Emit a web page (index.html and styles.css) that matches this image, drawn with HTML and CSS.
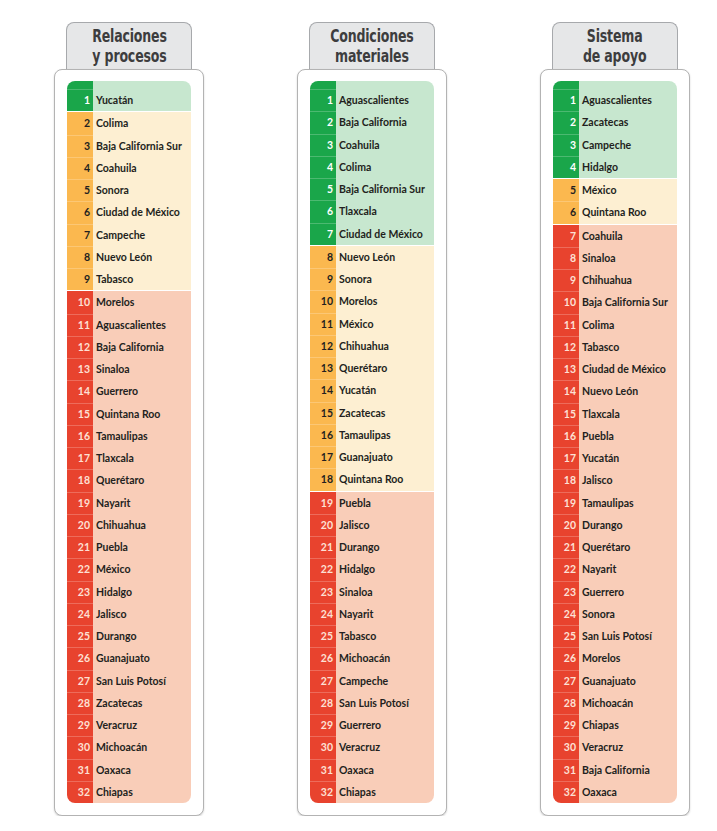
FILE: index.html
```html
<!DOCTYPE html>
<html lang="es">
<head>
<meta charset="utf-8">
<title>Ranking</title>
<link rel="stylesheet" href="styles.css">
</head>
<body>
<div class="page">
  <section class="col">
    <div class="tab"><h2 class="title"><span class="line">Relaciones</span><span class="line">y procesos</span></h2></div>
    <div class="card">
      <div class="table">
        <div class="group green first">
          <div class="row"><span class="n">1</span><span class="s">Yucatán</span></div>
        </div>
        <div class="group yellow">
          <div class="row"><span class="n">2</span><span class="s">Colima</span></div>
          <div class="row"><span class="n">3</span><span class="s">Baja California Sur</span></div>
          <div class="row"><span class="n">4</span><span class="s">Coahuila</span></div>
          <div class="row"><span class="n">5</span><span class="s">Sonora</span></div>
          <div class="row"><span class="n">6</span><span class="s">Ciudad de México</span></div>
          <div class="row"><span class="n">7</span><span class="s">Campeche</span></div>
          <div class="row"><span class="n">8</span><span class="s">Nuevo León</span></div>
          <div class="row"><span class="n">9</span><span class="s">Tabasco</span></div>
        </div>
        <div class="group red">
          <div class="row"><span class="n">10</span><span class="s">Morelos</span></div>
          <div class="row"><span class="n">11</span><span class="s">Aguascalientes</span></div>
          <div class="row"><span class="n">12</span><span class="s">Baja California</span></div>
          <div class="row"><span class="n">13</span><span class="s">Sinaloa</span></div>
          <div class="row"><span class="n">14</span><span class="s">Guerrero</span></div>
          <div class="row"><span class="n">15</span><span class="s">Quintana Roo</span></div>
          <div class="row"><span class="n">16</span><span class="s">Tamaulipas</span></div>
          <div class="row"><span class="n">17</span><span class="s">Tlaxcala</span></div>
          <div class="row"><span class="n">18</span><span class="s">Querétaro</span></div>
          <div class="row"><span class="n">19</span><span class="s">Nayarit</span></div>
          <div class="row"><span class="n">20</span><span class="s">Chihuahua</span></div>
          <div class="row"><span class="n">21</span><span class="s">Puebla</span></div>
          <div class="row"><span class="n">22</span><span class="s">México</span></div>
          <div class="row"><span class="n">23</span><span class="s">Hidalgo</span></div>
          <div class="row"><span class="n">24</span><span class="s">Jalisco</span></div>
          <div class="row"><span class="n">25</span><span class="s">Durango</span></div>
          <div class="row"><span class="n">26</span><span class="s">Guanajuato</span></div>
          <div class="row"><span class="n">27</span><span class="s">San Luis Potosí</span></div>
          <div class="row"><span class="n">28</span><span class="s">Zacatecas</span></div>
          <div class="row"><span class="n">29</span><span class="s">Veracruz</span></div>
          <div class="row"><span class="n">30</span><span class="s">Michoacán</span></div>
          <div class="row"><span class="n">31</span><span class="s">Oaxaca</span></div>
          <div class="row"><span class="n">32</span><span class="s">Chiapas</span></div>
        </div>
      </div>
    </div>
  </section>

  <section class="col">
    <div class="tab"><h2 class="title"><span class="line">Condiciones</span><span class="line">materiales</span></h2></div>
    <div class="card">
      <div class="table">
        <div class="group green first">
          <div class="row"><span class="n">1</span><span class="s">Aguascalientes</span></div>
          <div class="row"><span class="n">2</span><span class="s">Baja California</span></div>
          <div class="row"><span class="n">3</span><span class="s">Coahuila</span></div>
          <div class="row"><span class="n">4</span><span class="s">Colima</span></div>
          <div class="row"><span class="n">5</span><span class="s">Baja California Sur</span></div>
          <div class="row"><span class="n">6</span><span class="s">Tlaxcala</span></div>
          <div class="row"><span class="n">7</span><span class="s">Ciudad de México</span></div>
        </div>
        <div class="group yellow">
          <div class="row"><span class="n">8</span><span class="s">Nuevo León</span></div>
          <div class="row"><span class="n">9</span><span class="s">Sonora</span></div>
          <div class="row"><span class="n">10</span><span class="s">Morelos</span></div>
          <div class="row"><span class="n">11</span><span class="s">México</span></div>
          <div class="row"><span class="n">12</span><span class="s">Chihuahua</span></div>
          <div class="row"><span class="n">13</span><span class="s">Querétaro</span></div>
          <div class="row"><span class="n">14</span><span class="s">Yucatán</span></div>
          <div class="row"><span class="n">15</span><span class="s">Zacatecas</span></div>
          <div class="row"><span class="n">16</span><span class="s">Tamaulipas</span></div>
          <div class="row"><span class="n">17</span><span class="s">Guanajuato</span></div>
          <div class="row"><span class="n">18</span><span class="s">Quintana Roo</span></div>
        </div>
        <div class="group red">
          <div class="row"><span class="n">19</span><span class="s">Puebla</span></div>
          <div class="row"><span class="n">20</span><span class="s">Jalisco</span></div>
          <div class="row"><span class="n">21</span><span class="s">Durango</span></div>
          <div class="row"><span class="n">22</span><span class="s">Hidalgo</span></div>
          <div class="row"><span class="n">23</span><span class="s">Sinaloa</span></div>
          <div class="row"><span class="n">24</span><span class="s">Nayarit</span></div>
          <div class="row"><span class="n">25</span><span class="s">Tabasco</span></div>
          <div class="row"><span class="n">26</span><span class="s">Michoacán</span></div>
          <div class="row"><span class="n">27</span><span class="s">Campeche</span></div>
          <div class="row"><span class="n">28</span><span class="s">San Luis Potosí</span></div>
          <div class="row"><span class="n">29</span><span class="s">Guerrero</span></div>
          <div class="row"><span class="n">30</span><span class="s">Veracruz</span></div>
          <div class="row"><span class="n">31</span><span class="s">Oaxaca</span></div>
          <div class="row"><span class="n">32</span><span class="s">Chiapas</span></div>
        </div>
      </div>
    </div>
  </section>

  <section class="col">
    <div class="tab"><h2 class="title"><span class="line">Sistema</span><span class="line">de apoyo</span></h2></div>
    <div class="card">
      <div class="table">
        <div class="group green first">
          <div class="row"><span class="n">1</span><span class="s">Aguascalientes</span></div>
          <div class="row"><span class="n">2</span><span class="s">Zacatecas</span></div>
          <div class="row"><span class="n">3</span><span class="s">Campeche</span></div>
          <div class="row"><span class="n">4</span><span class="s">Hidalgo</span></div>
        </div>
        <div class="group yellow">
          <div class="row"><span class="n">5</span><span class="s">México</span></div>
          <div class="row"><span class="n">6</span><span class="s">Quintana Roo</span></div>
        </div>
        <div class="group red">
          <div class="row"><span class="n">7</span><span class="s">Coahuila</span></div>
          <div class="row"><span class="n">8</span><span class="s">Sinaloa</span></div>
          <div class="row"><span class="n">9</span><span class="s">Chihuahua</span></div>
          <div class="row"><span class="n">10</span><span class="s">Baja California Sur</span></div>
          <div class="row"><span class="n">11</span><span class="s">Colima</span></div>
          <div class="row"><span class="n">12</span><span class="s">Tabasco</span></div>
          <div class="row"><span class="n">13</span><span class="s">Ciudad de México</span></div>
          <div class="row"><span class="n">14</span><span class="s">Nuevo León</span></div>
          <div class="row"><span class="n">15</span><span class="s">Tlaxcala</span></div>
          <div class="row"><span class="n">16</span><span class="s">Puebla</span></div>
          <div class="row"><span class="n">17</span><span class="s">Yucatán</span></div>
          <div class="row"><span class="n">18</span><span class="s">Jalisco</span></div>
          <div class="row"><span class="n">19</span><span class="s">Tamaulipas</span></div>
          <div class="row"><span class="n">20</span><span class="s">Durango</span></div>
          <div class="row"><span class="n">21</span><span class="s">Querétaro</span></div>
          <div class="row"><span class="n">22</span><span class="s">Nayarit</span></div>
          <div class="row"><span class="n">23</span><span class="s">Guerrero</span></div>
          <div class="row"><span class="n">24</span><span class="s">Sonora</span></div>
          <div class="row"><span class="n">25</span><span class="s">San Luis Potosí</span></div>
          <div class="row"><span class="n">26</span><span class="s">Morelos</span></div>
          <div class="row"><span class="n">27</span><span class="s">Guanajuato</span></div>
          <div class="row"><span class="n">28</span><span class="s">Michoacán</span></div>
          <div class="row"><span class="n">29</span><span class="s">Chiapas</span></div>
          <div class="row"><span class="n">30</span><span class="s">Veracruz</span></div>
          <div class="row"><span class="n">31</span><span class="s">Baja California</span></div>
          <div class="row"><span class="n">32</span><span class="s">Oaxaca</span></div>
        </div>
      </div>
    </div>
  </section>
</div>
</body>
</html>
```

FILE: styles.css
```css
html, body {
  margin: 0;
  padding: 0;
  background: #ffffff;
}

.page {
  display: flex;
  gap: 93px;
  padding: 22px 0 0 54px;
  font-family: Lato, "Open Sans", sans-serif;
  color: #231f20;
}

.col {
  width: 150px;
  display: flex;
  flex-direction: column;
  align-items: center;
}

.tab {
  width: 124px;
  height: 46px;
  background: #e6e7e8;
  border: 1px solid #a7a9ac;
  border-bottom: none;
  border-radius: 8px 8px 0 0;
  display: flex;
  align-items: center;
  justify-content: center;
}

.title {
  margin: 0;
  padding-top: 1px;
  font-family: "Liberation Sans Narrow", "DejaVu Sans Condensed", "Liberation Sans", sans-serif;
  font-stretch: condensed;
  font-weight: 700;
  font-size: 17px;
  line-height: 19.5px;
  color: #3d3d3e;
  text-align: center;
  letter-spacing: -0.2px;
  display: flex;
  flex-direction: column;
  align-items: center;
  transform: scaleX(0.82);
}

.line {
  display: block;
  white-space: nowrap;
}

.card {
  box-sizing: border-box;
  width: 150px;
  border: 1px solid #b3b3b3;
  border-radius: 8px;
  background: #ffffff;
  padding: 11px 12px 12px 12px;
  box-shadow: 0 1px 2px rgba(0, 0, 0, 0.18);
}

.table {
  border-radius: 8px;
  overflow: hidden;
  display: flex;
  flex-direction: column;
}

.group {
  --dark: #1aa64a;
  --light: #c7e7cf;
  background: linear-gradient(to right, var(--dark) 26px, var(--light) 26px);
}

.group + .group {
  border-top: 1px solid #ffffff;
}

.group.first {
  padding-top: 8px;
}

.green {
  --dark: #1aa64a;
  --light: #c7e7cf;
  --num: #ffffff;
}

.yellow {
  --dark: #fbb84f;
  --light: #fdefd2;
  --num: #231f20;
}

.red {
  --dark: #e8432e;
  --light: #f9cdb8;
  --num: #fde0d4;
}

.row {
  display: grid;
  grid-template-columns: 26px 1fr;
  height: 22.25px;
  align-items: stretch;
  font-size: 10.5px;
  font-weight: 700;
  line-height: 22px;
}

.n {
  color: var(--num);
  text-align: right;
  padding-right: 3px;
  border-top: 1px solid rgba(255, 255, 255, 0.22);
  box-sizing: border-box;
  line-height: 20px;
}

.row:first-child .n {
  border-top-color: transparent;
}

.first .row:first-child .n {
  border-top-color: rgba(255, 255, 255, 0.22);
}

.s {
  padding-left: 3px;
  white-space: nowrap;
  line-height: 22px;
}
```
